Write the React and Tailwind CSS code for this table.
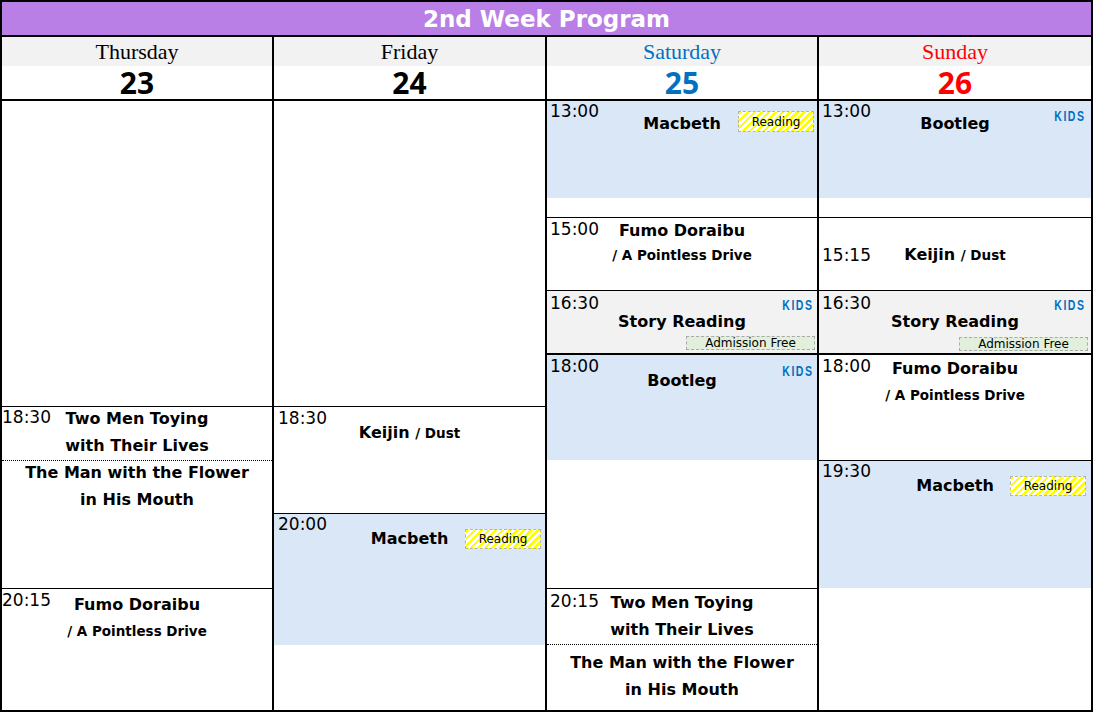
const SANS = "font-['DejaVu_Sans',sans-serif]"

function Time({ children, className = '' }) {
    return (
        <span className={`col-start-1 row-start-1 self-start justify-self-start text-[17px] leading-none ${className}`}>
            {children}
        </span>
    )
}

function Title({ children, className = '' }) {
    return <span className={`whitespace-nowrap text-[16px] font-bold leading-none ${className}`}>{children}</span>
}

function Sub({ children, className = '' }) {
    return <span className={`whitespace-nowrap text-[13.5px] font-bold leading-none ${className}`}>{children}</span>
}

// title block sits on top of the time, centred across the whole cell
function Heading({ children, className = '' }) {
    return (
        <div className={`col-start-1 row-start-1 flex flex-col items-center self-start ${className}`}>
            {children}
        </div>
    )
}

function Reading({ className = '' }) {
    return (
        <span
            className={`absolute flex w-[76px] items-center justify-center border border-dashed border-[#b4b4b4] bg-[image:repeating-linear-gradient(135deg,#ffff00_0px,#ffff00_2.5px,#ffffff_2.5px,#ffffff_5px)] text-[12px] leading-none text-black ${className}`}
        >
            Reading
        </span>
    )
}

function Kids({ className = '' }) {
    return (
        <span
            className={`absolute origin-right scale-x-75 font-['Liberation_Sans',sans-serif] text-[14px] font-bold leading-none tracking-[2px] text-[#0070c0] ${className}`}
        >
            KIDS
        </span>
    )
}

function Free({ className = '' }) {
    return (
        <span
            className={`absolute flex h-[14px] w-[129px] items-center justify-center border border-dashed border-[#a9a9a9] bg-[#e2efda] text-[12px] leading-none ${className}`}
        >
            Admission Free
        </span>
    )
}

function DayHead({ day, date, color = 'text-black', last = false }) {
    return (
        <div className={last ? '' : 'border-r-2 border-black'}>
            <div className={`flex h-[29px] items-center justify-center bg-[#f2f2f2] font-['Liberation_Serif',serif] text-[22px] leading-none ${color}`}>
                {day}
            </div>
            <div className={`flex h-[35px] items-center justify-center border-b-2 border-black font-['Noto_Sans',sans-serif] text-[30px] font-bold leading-none ${color}`}>
                {date}
            </div>
        </div>
    )
}

function StoryReading({ freeClass, kidsClass }) {
    return (
        <div className="relative grid h-[64px] border-b-2 border-black bg-[#f2f2f2]">
            <Time className="mt-[4px] pl-[3px]">16:30</Time>
            <Heading className="mt-[23px]">
                <Title>Story Reading</Title>
            </Heading>
            <Kids className={kidsClass} />
            <Free className={freeClass} />
        </div>
    )
}

export default function App() {
    return (
        <div className={`h-[712px] w-[1093px] border-2 border-black bg-white text-black ${SANS}`}>
            {/* Title */}
            <div className="flex h-[35px] items-center justify-center border-b-2 border-black bg-[#b97fe6] pt-[2px] text-[23px] font-bold leading-none text-white">
                2nd Week Program
            </div>

            <div className="grid grid-cols-[272px_273px_272px_272px]">
                <DayHead day="Thursday" date="23" />
                <DayHead day="Friday" date="24" />
                <DayHead day="Saturday" date="25" color="text-[#0070c0]" />
                <DayHead day="Sunday" date="26" color="text-[#ff0000]" last />

                {/* Thursday */}
                <div className="flex h-[609px] flex-col border-r-2 border-black">
                    <div className="h-[306px] border-b border-black" />
                    <div className="flex h-[182px] flex-col border-b border-black">
                        <div className="grid h-[54px] border-b border-dotted border-black">
                            <Time className="mt-[2px]">18:30</Time>
                            <Heading className="mt-[4px] gap-[11px]">
                                <Title>Two Men Toying</Title>
                                <Title>with Their Lives</Title>
                            </Heading>
                        </div>
                        <div className="flex flex-col items-center gap-[11px] pt-[4px]">
                            <Title>The Man with the Flower</Title>
                            <Title>in His Mouth</Title>
                        </div>
                    </div>
                    <div className="grid flex-1">
                        <Time className="mt-[3px]">20:15</Time>
                        <Heading className="mt-[8px] gap-[12px]">
                            <Title>Fumo Doraibu</Title>
                            <Sub>/ A Pointless Drive</Sub>
                        </Heading>
                    </div>
                </div>

                {/* Friday */}
                <div className="flex h-[609px] flex-col border-r-2 border-black">
                    <div className="h-[306px] border-b border-black" />
                    <div className="grid h-[107px] border-b border-black">
                        <Time className="mt-[3px] pl-[4px]">18:30</Time>
                        <Heading className="mt-[18px]">
                            <div className="text-[16px] font-bold leading-none">
                                Keijin <Sub>/ Dust</Sub>
                            </div>
                        </Heading>
                    </div>
                    <div className="flex flex-1 flex-col">
                        <div className="relative grid h-[131px] bg-[#dae7f6]">
                            <Time className="mt-[2px] pl-[4px]">20:00</Time>
                            <Heading className="mt-[17px]">
                                <Title>Macbeth</Title>
                            </Heading>
                            <Reading className="right-[4px] top-[15px] h-[20px]" />
                        </div>
                    </div>
                </div>

                {/* Saturday */}
                <div className="flex h-[609px] flex-col border-r-2 border-black">
                    <div className="h-[117px] border-b border-black">
                        <div className="relative grid h-[97px] bg-[#dae7f6]">
                            <Time className="mt-[2px] pl-[3px]">13:00</Time>
                            <Heading className="mt-[15px]">
                                <Title>Macbeth</Title>
                            </Heading>
                            <Reading className="right-[3px] top-[10px] h-[21px]" />
                        </div>
                    </div>
                    <div className="grid h-[73px] border-b border-black">
                        <Time className="mt-[3px] pl-[3px]">15:00</Time>
                        <Heading className="mt-[5px] gap-[10px]">
                            <Title>Fumo Doraibu</Title>
                            <Sub>/ A Pointless Drive</Sub>
                        </Heading>
                    </div>
                    <StoryReading freeClass="right-[2px] top-[45px]" kidsClass="right-[4px] top-[7px]" />
                    <div className="h-[234px] border-b border-black">
                        <div className="relative grid h-[105px] bg-[#dae7f6]">
                            <Time className="mt-[3px] pl-[3px]">18:00</Time>
                            <Heading className="mt-[18px]">
                                <Title>Bootleg</Title>
                            </Heading>
                            <Kids className="right-[4px] top-[9px]" />
                        </div>
                    </div>
                    <div className="flex flex-1 flex-col">
                        <div className="grid h-[56px] border-b border-dotted border-black">
                            <Time className="mt-[4px] pl-[3px]">20:15</Time>
                            <Heading className="mt-[6px] gap-[11px]">
                                <Title>Two Men Toying</Title>
                                <Title>with Their Lives</Title>
                            </Heading>
                        </div>
                        <div className="flex flex-col items-center gap-[11px] pt-[10px]">
                            <Title>The Man with the Flower</Title>
                            <Title>in His Mouth</Title>
                        </div>
                    </div>
                </div>

                {/* Sunday */}
                <div className="flex h-[609px] flex-col">
                    <div className="h-[117px] border-b border-black">
                        <div className="relative grid h-[97px] bg-[#dae7f6]">
                            <Time className="mt-[2px] pl-[3px]">13:00</Time>
                            <Heading className="mt-[15px]">
                                <Title>Bootleg</Title>
                            </Heading>
                            <Kids className="right-[6px] top-[8px]" />
                        </div>
                    </div>
                    <div className="flex h-[73px] items-center border-b border-black pt-[2px]">
                        <div className="grid w-full items-center">
                            <Time className="self-center pl-[3px]">15:15</Time>
                            <div className="col-start-1 row-start-1 text-center text-[16px] font-bold leading-none">
                                Keijin <Sub>/ Dust</Sub>
                            </div>
                        </div>
                    </div>
                    <StoryReading freeClass="right-[3px] top-[46px]" kidsClass="right-[6px] top-[7px]" />
                    <div className="grid h-[106px] border-b border-black">
                        <Time className="mt-[3px] pl-[3px]">18:00</Time>
                        <Heading className="mt-[6px] gap-[12px]">
                            <Title>Fumo Doraibu</Title>
                            <Sub>/ A Pointless Drive</Sub>
                        </Heading>
                    </div>
                    <div className="flex flex-1 flex-col">
                        <div className="relative grid h-[127px] bg-[#dae7f6]">
                            <Time className="mt-[2px] pl-[3px]">19:30</Time>
                            <Heading className="mt-[17px]">
                                <Title>Macbeth</Title>
                            </Heading>
                            <Reading className="right-[5px] top-[15px] h-[20px]" />
                        </div>
                    </div>
                </div>
            </div>
        </div>
    )
}
